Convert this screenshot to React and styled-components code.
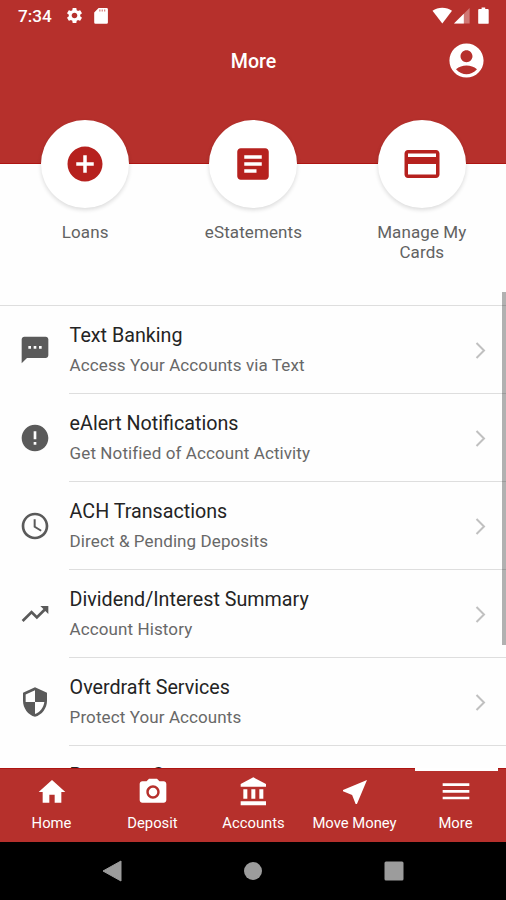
import React from 'react';
import styled, {createGlobalStyle} from 'styled-components';
import {
    MdSettings,
    MdAccountCircle,
    MdAddCircle,
    MdArticle,
    MdCreditCard,
    MdTextsms,
    MdError,
    MdAccessTime,
    MdTrendingUp,
    MdSecurity,
    MdHome,
    MdPhotoCamera,
    MdNearMe,
    MdDehaze,
} from 'react-icons/md';

const GlobalStyle = createGlobalStyle`
  * {
    box-sizing: border-box;
  }
  body {
    margin: 0;
    background: #fefefe;
    font-family: Roboto, "Liberation Sans", sans-serif;
  }
  svg {
    display: block;
    flex-shrink: 0;
  }
`;
const Screen = styled.div`
  width: 506px;
  height: 900px;
  display: flex;
  flex-direction: column;
  overflow: hidden;
  background: #fefefe;
`;
const Header = styled.header`
  height: 164px;
  flex-shrink: 0;
  background: #b6302c;
  border-bottom: 1px solid #ae1512;
  color: #fff;
`;
const StatusBar = styled.div`
  height: 31px;
  padding: 0 16px 0 18px;
  display: flex;
  align-items: center;
  justify-content: space-between;
`;
const StatusGroup = styled.div`
  display: flex;
  align-items: center;
`;
const Clock = styled.span`
  width: 46.5px;
  font-size: 17.2px;
  line-height: 20px;
  font-weight: 500;
`;
const TitleBar = styled.div`
  height: 58px;
  padding: 0 19px 0 20px;
  display: grid;
  grid-template-columns: 41px 1fr 41px;
  align-items: center;
`;
const Title = styled.h1`
  grid-column: 2;
  margin: 4px 0 0;
  text-align: center;
  font-size: 19.6px;
  line-height: 24px;
  font-weight: 500;
`;
const Shortcuts = styled.div`
  height: 185px;
  margin-top: -44px;
  padding-left: 1px;
  flex-shrink: 0;
  display: grid;
  grid-template-columns: repeat(3, 1fr);
`;
const Shortcut = styled.div`
  display: flex;
  flex-direction: column;
  align-items: center;
`;
const ShortcutCircle = styled.div`
  width: 88px;
  height: 88px;
  border-radius: 50%;
  display: flex;
  align-items: center;
  justify-content: center;
  background: #fff;
  color: #b6211e;
  box-shadow: 0 2px 4px rgba(0, 0, 0, 0.14);
`;
const ShortcutLabel = styled.p`
  width: 110px;
  margin: 14px 0 0;
  text-align: center;
  font-size: 17px;
  line-height: 20px;
  letter-spacing: 0.1px;
  color: #626262;
`;
const ScrollArea = styled.div`
  flex: 1;
  min-height: 0;
  position: relative;
  display: flex;
`;
const List = styled.div`
  flex: 1;
  min-height: 0;
  overflow: hidden;
  border-top: 1px solid #dedede;
`;
const Row = styled.div`
  height: 88px;
  display: flex;
`;
const RowIcon = styled.div`
  width: 69px;
  padding: 0 0 1px 1px;
  display: flex;
  align-items: center;
  justify-content: center;
  color: #5a5a5a;
`;
const RowBody = styled.div`
  flex: 1;
  padding: 2px 19px 0 0;
  display: flex;
  align-items: center;
  justify-content: space-between;
  border-bottom: 1px solid #dedede;
`;
const RowTitle = styled.p`
  margin: 0 0 0 0.6px;
  font-size: 19.7px;
  line-height: 24px;
  color: #242424;
`;
const RowText = styled.p`
  margin: 7px 0 2px 0.6px;
  font-size: 17px;
  line-height: 20px;
  letter-spacing: 0.1px;
  color: #686868;
`;
const ScrollThumb = styled.div`
  position: absolute;
  top: -13px;
  right: 0;
  width: 4px;
  height: 353px;
  background: rgba(0, 0, 0, 0.3);
`;
const TabBar = styled.nav`
  height: 74px;
  padding-left: 1px;
  flex-shrink: 0;
  display: grid;
  grid-template-columns: repeat(5, 1fr);
  background: #b6302c;
  border-top: 1px solid #ae1512;
`;
const Tab = styled.div`
  position: relative;
  padding-top: 7px;
  display: flex;
  flex-direction: column;
  align-items: center;
  color: #fff;
`;
const TabLabel = styled.span`
  margin-top: 6px;
  font-size: 14.8px;
  line-height: 18px;
  white-space: nowrap;
`;
const TabIndicator = styled.div`
  position: absolute;
  top: -1px;
  left: 10px;
  width: 83px;
  height: 3px;
  background: #fff;
`;
const SystemNav = styled.div`
  height: 58px;
  flex-shrink: 0;
  display: flex;
  align-items: center;
  justify-content: space-between;
  padding: 0 102px;
  background: #000;
  color: #9c9c9c;
`;
const CardSvg = styled.svg`
  margin-left: 10px;
`;

const SdCard = () => (
    <CardSvg width="14" height="16" viewBox="0 0 14 16">
        <path d="M4.6 0H12.6a1.3 1.3 0 0 1 1.3 1.3v13.2a1.3 1.3 0 0 1-1.3 1.3H1.5A1.3 1.3 0 0 1 .2 14.5V4.5z" fill="#fff"/>
        <path d="M5.2 1.500h1.3v2H5.2zM7.600 1.500h1.3v2H7.600zM10 1.500h1.3v2H10z" fill="#d98583"/>
    </CardSvg>
);

const SignalIcons = () => (
    <svg width="58" height="18" viewBox="0 0 58 18">
        <path d="M0.500 3.800C6-.4 14.500-.4 20 3.800L10.300 16.500z" fill="#fff"/>
        <path d="M37.600 1v15.500H22z" fill="#fff" opacity=".35"/>
        <path d="M31.800 6.800v9.700H22z" fill="#fff"/>
        <path d="M49.600 .5h3.600v1.500h2.600c.5 0 .9.400.9.900v13c0 .5-.4.900-.9.900h-8.700c-.5 0-.9-.4-.9-.9v-13c0-.5.400-.9.900-.9h2.500z" fill="#fff"/>
    </svg>
);

const Bank = ({size}) => (
    <svg width={size} height={size} viewBox="0 0 24 24" fill="currentColor">
        <path d="M4 10v7h3v-7H4zm6 0v7h3v-7h-3zM2 22h19v-3H2v3zm14-12v7h3v-7h-3zm-4.500-9L2 6v2h19V6l-9.500-5z"/>
    </svg>
);

const Chevron = () => (
    <svg width="12" height="18" viewBox="0 0 12 18">
        <path d="M1.500 1L9 8.500 1.500 16" fill="none" stroke="#c0c0c0" strokeWidth="2"/>
    </svg>
);

const shortcuts = [
    {label: 'Loans', icon: MdAddCircle},
    {label: 'eStatements', icon: MdArticle},
    {label: 'Manage My Cards', icon: MdCreditCard},
];

const rows = [
    {title: 'Text Banking', text: 'Access Your Accounts via Text', icon: MdTextsms},
    {title: 'eAlert Notifications', text: 'Get Notified of Account Activity', icon: MdError},
    {title: 'ACH Transactions', text: 'Direct & Pending Deposits', icon: MdAccessTime},
    {title: 'Dividend/Interest Summary', text: 'Account History', icon: MdTrendingUp},
    {title: 'Overdraft Services', text: 'Protect Your Accounts', icon: MdSecurity},
    {title: 'Payment C'},
];

const tabs = [
    {label: 'Home', icon: MdHome},
    {label: 'Deposit', icon: MdPhotoCamera},
    {label: 'Accounts', icon: Bank},
    {label: 'Move Money', icon: MdNearMe},
    {label: 'More', icon: MdDehaze, active: true},
];

const ListRow = ({title, text, icon: Icon}) => (
    <Row>
        <RowIcon>{Icon && <Icon size={32}/>}</RowIcon>
        <RowBody>
            <div>
                <RowTitle>{title}</RowTitle>
                <RowText>{text || '\u00a0'}</RowText>
            </div>
            <Chevron/>
        </RowBody>
    </Row>
);

const App = () => {
    return (
        <>
            <GlobalStyle/>
            <Screen>
                <Header>
                    <StatusBar>
                        <StatusGroup>
                            <Clock>7:34</Clock>
                            <MdSettings size={19}/>
                            <SdCard/>
                        </StatusGroup>
                        <SignalIcons/>
                    </StatusBar>
                    <TitleBar>
                        <Title>More</Title>
                        <MdAccountCircle size={41}/>
                    </TitleBar>
                </Header>
                <Shortcuts>
                    {shortcuts.map(({label, icon: Icon}) => (
                        <Shortcut key={label}>
                            <ShortcutCircle><Icon size={42}/></ShortcutCircle>
                            <ShortcutLabel>{label}</ShortcutLabel>
                        </Shortcut>
                    ))}
                </Shortcuts>
                <ScrollArea>
                    <List>
                        {rows.map((row) => <ListRow key={row.title} {...row}/>)}
                    </List>
                    <ScrollThumb/>
                </ScrollArea>
                <TabBar>
                    {tabs.map(({label, icon: Icon, active}) => (
                        <Tab key={label}>
                            {active && <TabIndicator/>}
                            <Icon size={32}/>
                            <TabLabel>{label}</TabLabel>
                        </Tab>
                    ))}
                </TabBar>
                <SystemNav>
                    <svg width="20" height="22" viewBox="0 0 20 22">
                        <path d="M1 11L19 1v20z" fill="currentColor" stroke="currentColor" strokeLinejoin="round"/>
                    </svg>
                    <svg width="18" height="18" viewBox="0 0 18 18">
                        <circle cx="9" cy="9" r="9" fill="currentColor"/>
                    </svg>
                    <svg width="20" height="20" viewBox="0 0 20 20">
                        <rect x="0.500" y="0.500" width="19" height="19" rx="1.500" fill="currentColor"/>
                    </svg>
                </SystemNav>
            </Screen>
        </>
    );
};

export default App;
